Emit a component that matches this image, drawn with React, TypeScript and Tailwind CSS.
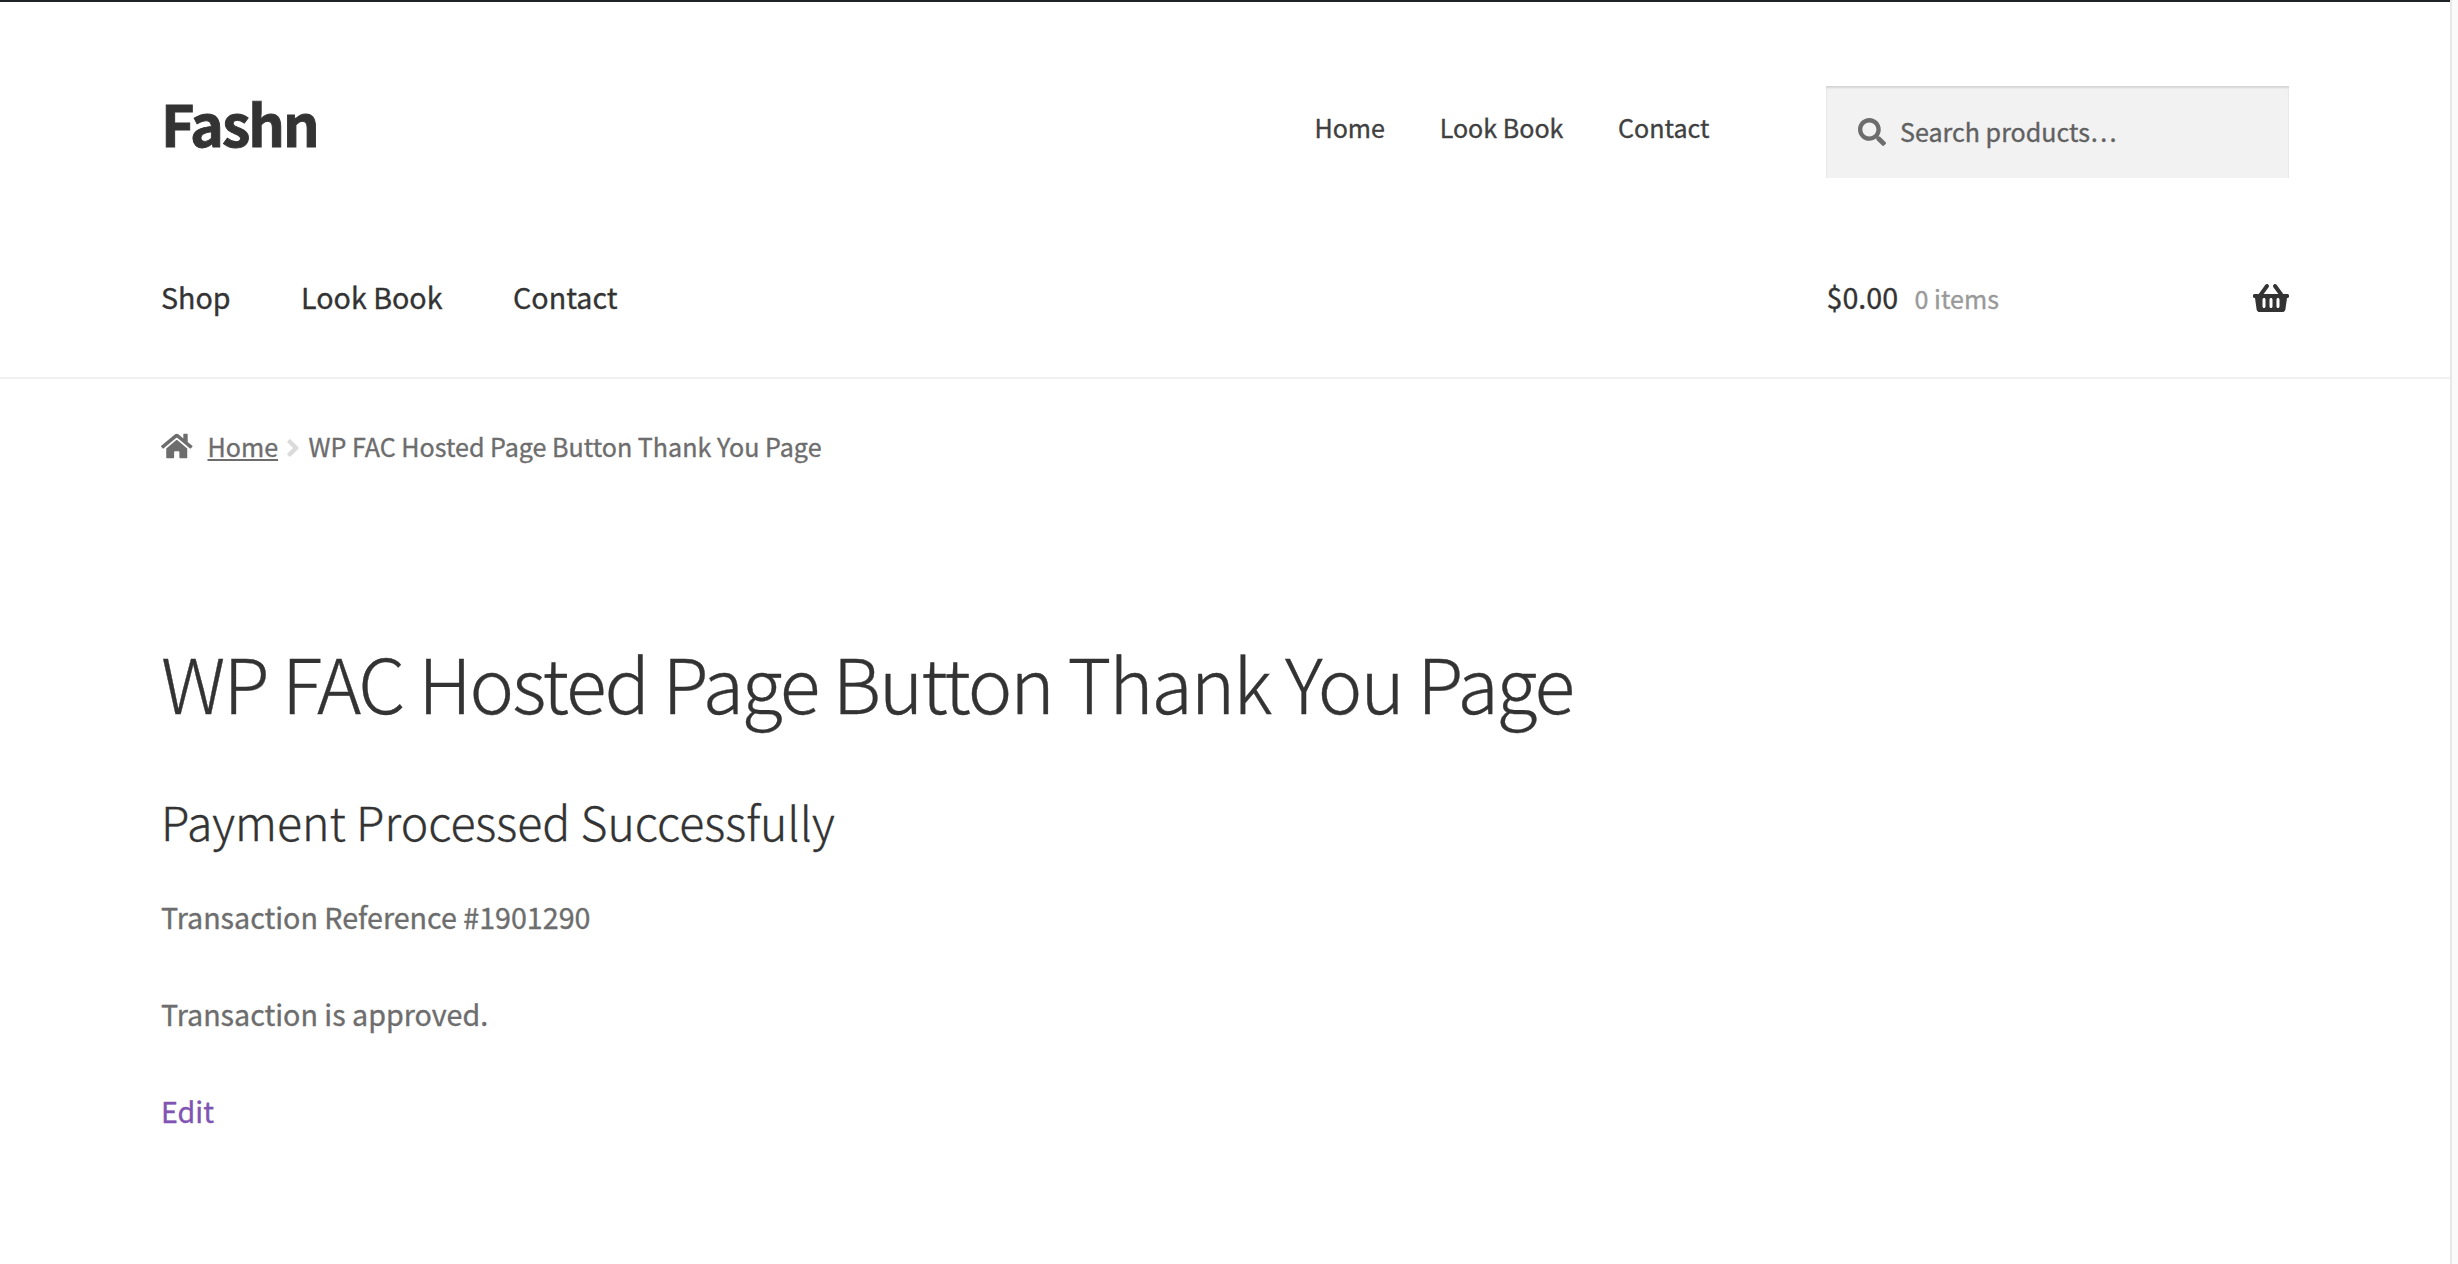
import type { ReactNode } from 'react';
import { FaAngleRight, FaHome, FaSearch, FaShoppingBasket } from 'react-icons/fa';

const PAGE_TITLE = 'WP FAC Hosted Page Button Thank You Page';
const SECONDARY_LINKS = ['Home', 'Look Book', 'Contact'];
const PRIMARY_LINKS = ['Shop', 'Look Book', 'Contact'];

function Container({ children, className = '' }: { children: ReactNode; className?: string }) {
  return <div className={`mx-[161px] ${className}`}>{children}</div>;
}

function SiteHeader() {
  return (
    <header className="border-b-2 border-[#f0f0f0] pt-[79px] pb-[55px] text-[#333333]">
      <Container className="flex items-start">
        <a
          href="#"
          className="mt-px text-[57.3px] leading-[82px] font-bold tracking-[-2px] [-webkit-text-stroke:0.9px]"
        >
          Fashn
        </a>
        <nav className="mt-[23px] mr-[116.5px] ml-auto flex gap-[54.7px] text-[25.07px] leading-[46px] text-[#404040]">
          {SECONDARY_LINKS.map((label) => (
            <a key={label} href="#">
              {label}
            </a>
          ))}
        </nav>
        <form className="mt-[5px] flex h-[92px] w-[463px] items-center bg-[#f2f2f2] pl-8 text-[25.07px] shadow-[inset_0_2px_2px_rgba(0,0,0,0.125)]">
          <FaSearch className="size-7 text-[#6d6d6d]" />
          <span className="mb-0.5 ml-[14px] leading-[46px] text-[#616161]">Search products…</span>
        </form>
      </Container>
      <Container className="mt-[93px] flex items-start text-[28.65px] leading-[51px]">
        <nav className="flex gap-[70.5px]">
          {PRIMARY_LINKS.map((label) => (
            <a key={label} href="#">
              {label}
            </a>
          ))}
        </nav>
        <a href="#" className="ml-auto flex w-[463px] items-baseline pl-[0.5px]">
          <span>$0.00</span>
          <span className="ml-[16.5px] text-[25.07px] leading-[46px] text-[#999999]">0 items</span>
          <FaShoppingBasket className="mt-[11px] ml-auto h-8 w-9 self-start" />
        </a>
      </Container>
    </header>
  );
}

function Breadcrumb() {
  return (
    <nav className="mt-11 flex items-center text-[25.07px] leading-[46px]">
      <FaHome className="h-7 w-[31.5px]" />
      <a href="#" className="ml-[15px] underline decoration-2 underline-offset-[2px]">
        Home
      </a>
      <FaAngleRight className="mt-1 ml-2 h-7 w-[14px] text-[#dbdbdb]" />
      <span className="ml-[8.5px]">{PAGE_TITLE}</span>
    </nav>
  );
}

export default function App() {
  return (
    <div className="flex h-[1264px] bg-white font-['Noto_Sans_CJK_SC',sans-serif] text-[#6d6d6d] [-webkit-text-stroke:0.35px]">
      <div className="w-[2450px] shrink-0 border-t-2 border-[#1d2327]">
        <SiteHeader />
        <Container>
          <Breadcrumb />
          <main className="mt-[167px]">
            <h1 className="text-[75.2px] leading-[91px] font-light tracking-[-2px] text-[#333333]">{PAGE_TITLE}</h1>
            <h2 className="mt-[65px] text-[46.42px] leading-[57px] font-light text-[#333333]">
              Payment Processed Successfully
            </h2>
            <div className="mt-[42px] flex flex-col items-start gap-[46px] text-[28.65px] leading-[51px]">
              <p>Transaction Reference #1901290</p>
              <p>Transaction is approved.</p>
              <a href="#" className="text-[#7f54b3]">
                Edit
              </a>
            </div>
          </main>
        </Container>
      </div>
      <div className="grow border-l-2 border-[#e8e8e8] bg-[#fafafa]" />
    </div>
  );
}
